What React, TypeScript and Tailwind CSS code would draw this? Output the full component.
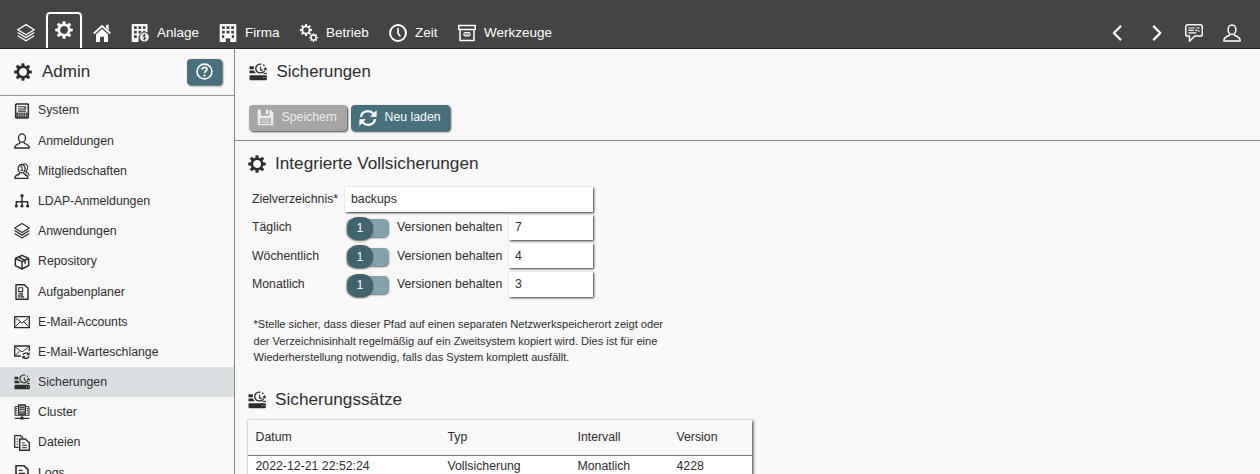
import React from 'react';

type IconProps = { className?: string };

function Svg({ className = 'size-4', children }: IconProps & { children: React.ReactNode }) {
  return (
    <svg viewBox="0 0 24 24" className={`${className} block shrink-0`} fill="none" stroke="currentColor" strokeWidth="2" strokeLinejoin="round">
      {children}
    </svg>
  );
}

const GEAR_ANGLES = [0, 45, 90, 135, 180, 225, 270, 315];

function GearShape({ w = 3.3 }: { w?: number }) {
  return (
    <g>
      <circle cx="12" cy="12" r="6.9" strokeWidth={w} />
      {GEAR_ANGLES.map((a) => (
        <path key={a} transform={`rotate(${a} 12 12)`} d="M9.7 4.6 10.2.2h3.6l.5 4.4Z" fill="currentColor" stroke="none" />
      ))}
    </g>
  );
}

const Gear = ({ className }: IconProps) => <Svg className={className}><GearShape /></Svg>;

const Gears = ({ className }: IconProps) => (
  <Svg className={className}>
    <g transform="translate(-.2 -.2) scale(.68)"><GearShape w={3.1} /></g>
    <g transform="translate(12.2 12.2) scale(.49)"><GearShape w={3.6} /></g>
  </Svg>
);

const Layers = ({ className }: IconProps) => (
  <Svg className={className}>
    <path d="M12 .8 23 7.6 12 14.4 1 7.6Z" strokeWidth="1.8" />
    <path d="M1 11.4l11 6.8 11-6.8M1 15.6l11 6.8 11-6.8" strokeWidth="1.8" />
  </Svg>
);

const Home = ({ className }: IconProps) => (
  <Svg className={className}>
    <path d="M1 12.7 12 2.6l11 10.1" strokeWidth="2.5" />
    <path d="M4 14 12 6.8l8 7.2V24h-5.3v-7H9.3v7H4Z" fill="currentColor" stroke="none" />
    <path d="M17.5 1h3.4v7.5l-3.4-3.1Z" fill="currentColor" stroke="none" />
  </Svg>
);

const Building = ({ className }: IconProps) => (
  <Svg className={className}>
    <path fillRule="evenodd" fill="currentColor" stroke="none" d="M1 0h22v24h-8v-5H9v5H1ZM4 3v3.5h3.7V3ZM10 3v3.5h4V3ZM16.3 3v3.5H20V3ZM4 9v3.5h3.7V9ZM10 9v3.5h4V9ZM16.3 9v3.5H20V9ZM4 15v3.5h3V15ZM17 15v3.5h3V15Z" />
  </Svg>
);

const Asset = ({ className }: IconProps) => (
  <Svg className={className}>
    <path fillRule="evenodd" fill="currentColor" stroke="none" d="M1 0h21v11h-9l-3 6v7H1ZM4 3v3.5h3.7V3ZM10 3v3.5h3.7V3ZM16 3v3.5h3.3V3ZM4 9v3.5h3.7V9ZM10 9v3.5h3.7V9ZM16 9v3.5h3.3V9ZM4 15v3.5h3.7V15Z" />
    <circle cx="17.8" cy="17.6" r="6.3" fill="currentColor" stroke="#444" strokeWidth="1" />
    <path d="M20 15.2c-1-1.2-4.4-1.1-4.3.7.1 1.7 4.3 1.1 4.3 3s-3.5 2-4.6.6M17.8 13v9" stroke="#444" strokeWidth="1.3" />
  </Svg>
);

const Clock = ({ className }: IconProps) => (
  <Svg className={className}>
    <circle cx="12" cy="12" r="10.6" strokeWidth="2.6" />
    <path d="M12 5.3v7l3 4.2" strokeWidth="2.2" />
  </Svg>
);

const Archive = ({ className }: IconProps) => (
  <Svg className={className}>
    <path d="M1 2h22v5.3H1ZM2.7 7.3h18.6V22H2.7Z" />
    <rect x="8" y="11.5" width="8" height="4.2" rx="1.5" strokeWidth="1.6" />
    <path d="M10 13.6h4" strokeWidth="1.2" />
  </Svg>
);

const User = ({ className }: IconProps) => (
  <Svg className={className}>
    <ellipse cx="12" cy="7.6" rx="5.2" ry="6.4" />
    <path d="M8.5 13.8v1.6C4.2 16.7 1.1 18.3 1 22.5h22c-.1-4.2-3.2-5.8-7.5-7.1v-1.6" />
  </Svg>
);

const Chat = ({ className }: IconProps) => (
  <Svg className={className}>
    <path d="M3.5 1h17A2.5 2.5 0 0 1 23 3.5v10a2.5 2.5 0 0 1-2.5 2.5H13l-7 7v-7H3.5A2.5 2.5 0 0 1 1 13.5v-10A2.5 2.5 0 0 1 3.5 1Z" />
    <path d="M4.5 5.3H13M15 5.3h4.5M4.5 8.5h7M13.5 8.500h3M4.5 11.700H15M17.5 9.5h2" strokeWidth="1.6" />
  </Svg>
);

const Chevron = ({ right }: { right?: boolean }) => (
  <Svg className="size-[18px]">
    <path d={right ? 'M7 2.5 16.5 12 7 21.5' : 'M16 2.5 6.5 12l9.500 9.500'} strokeWidth="2.9" />
  </Svg>
);

const Help = ({ className }: IconProps) => (
  <Svg className={className}>
    <circle cx="12" cy="12" r="10.5" strokeWidth="2.3" />
    <path d="M8.7 9.3C8.8 4.9 15.6 5.1 15.3 9c-.2 2.5-3.3 2.4-3.3 5.4" strokeWidth="2.5" />
    <circle cx="12" cy="17.8" r="1.5" fill="currentColor" stroke="none" />
  </Svg>
);

const Server = ({ className }: IconProps) => (
  <Svg className={className}>
    <rect x="2.5" y="1.5" width="19" height="21" rx="1" strokeWidth="2.3" />
    <path d="M6 5.7h12M6 9h12M6 12.2h12" strokeWidth="1.7" />
    <path d="M3 14h18v8H3Z" fill="currentColor" fillOpacity=".5" stroke="none" />
    <path d="M4 16.5h16M4 20h16" strokeWidth="2" strokeDasharray="2 1.5" />
    <path d="M15.5 7.5h3" strokeWidth="2" />
  </Svg>
);

const Membership = ({ className }: IconProps) => (
  <Svg className={className}>
    <path d="M14 1.6c4.7-1.6 7.7 2.8 6 7.5-.5 1.800-1.600 3-2.500 4 3 1.300 5 3 5.500 6" strokeWidth="1.6" />
    <ellipse cx="11.5" cy="8.5" rx="5.2" ry="6.3" />
    <path d="M8.5 14.5v1.3C4.3 17 1.5 18.7 1.2 23h20c-.5-4-3-6-6.5-7.2v-1.3" strokeWidth="1.9" />
    <path d="M9.5 6.2 12 5v6M9.5 11h4.5M5 20l3-3M16 17l2.5 3" strokeWidth="1.5" />
  </Svg>
);

const Tree = ({ className }: IconProps) => (
  <Svg className={className}>
    <path d="M12 4v16M3.5 20v-7h17v7" strokeWidth="2.2" />
    <g fill="currentColor" stroke="none">
      <circle cx="12" cy="4" r="2.5" />
      <circle cx="3.5" cy="19.5" r="2.4" />
      <circle cx="12" cy="19.5" r="2.4" />
      <circle cx="20.5" cy="19.5" r="2.4" />
    </g>
  </Svg>
);

const Box = ({ className }: IconProps) => (
  <Svg className={className}>
    <path d="M12 2 22 6.5v10.8L12 22.5 2 17.3V6.5ZM2 6.5 12 11.5 22 6.5M12 11.5v11" strokeWidth="2.2" />
    <path d="m6.5 4.5 10.2 5v5" strokeWidth="2.2" />
  </Svg>
);

const Planner = ({ className }: IconProps) => (
  <Svg className={className}>
    <path d="M3 1h12.5l5.5 5.5V23H3Z" strokeWidth="2.2" />
    <path d="M7 5.5h6v5.7H7ZM7 14h5.5v2.5H7v3h8M11 17l3.5 3.5" strokeWidth="1.6" />
  </Svg>
);

const Mail = ({ className }: IconProps) => (
  <Svg className={className}>
    <path d="M1 4h22v16.5H1Z" />
    <path d="m2 5.5 10 8 10-8M2 19l7-7M22 19l-7-7" strokeWidth="1.5" />
  </Svg>
);

const MailQueue = ({ className }: IconProps) => (
  <Svg className={className}>
    <path d="M10.5 18H1V3h22v8" />
    <path d="m2 4.5 10 7.5 10-7.5M2 17l6-6" strokeWidth="1.5" />
    <path d="M13.5 16.5c1.7-4.3 7-4.2 8.5-.8M22.5 18.5c-1.7 4.3-7 4.2-8.5.8" />
    <path d="M23.5 12v5h-5ZM12.5 23v-5h5Z" fill="currentColor" stroke="none" />
  </Svg>
);

const Backup = ({ className }: IconProps) => (
  <Svg className={className}>
    <path d="M.7 4.2h5.8v4H.7ZM.7 10h5.6l3 3.8H.7ZM2 16.3h20.5a1.3 1.3 0 0 1 1.3 1.3v4a1.3 1.3 0 0 1-1.3 1.3H2A1.3 1.3 0 0 1 .7 21.6v-4A1.3 1.3 0 0 1 2 16.3Z" fill="currentColor" stroke="none" />
    <path d="M16.5 1.7C11.5.7 8.3 4.5 9.2 8.7c1 4.9 8.8 6.5 12.2 1.3" strokeWidth="1.8" />
    <path d="M15.5 5v4.2l2.8 1.3M18.7 2.4l2 1.6" strokeWidth="1.6" />
    <path d="m18.8 8.3 3.8-3 1.4 4.7Z" fill="currentColor" stroke="none" />
    <path d="M19.5 14h4.2" strokeWidth="1.6" />
    <path d="M18.5 19.6h1M21 19.6h1" stroke="#eee" strokeWidth="1.3" />
  </Svg>
);

const Cluster = ({ className }: IconProps) => (
  <Svg className={className}>
    <path d="M7 1.5h10v15H7Z" fill="currentColor" fillOpacity=".25" />
    <path d="M6 4H1.5v13H6M18 4h4.5v13H18" strokeWidth="1.5" />
    <path d="M9 5h6M9 8h6M2 7h3M2 10h3M2 13.5h3M19 7h3M19 10h3M19 13.5h3" strokeWidth="1.5" />
    <path d="M8 11h8v5H8Z" fill="currentColor" fillOpacity=".6" stroke="none" />
    <path d="M1 21.5h22M12 17v4.5" strokeWidth="2" />
    <path d="M9.5 19.8h5v3.4h-5Z" fill="currentColor" stroke="none" />
  </Svg>
);

const Files = ({ className }: IconProps) => (
  <Svg className={className}>
    <path d="M7 18.5H1V1h9l3.5 3" />
    <path d="M8.5 6H17l6 5.5V23H8.5Z" strokeWidth="2.2" />
    <path d="M12 12h4M12 15.5h7.5M12 19h7.5M4 6h2M4 10h2M4 14h2" strokeWidth="1.6" />
  </Svg>
);

const Log = ({ className }: IconProps) => (
  <Svg className={className}>
    <path d="M3 1h12l6 6v16H3Z" strokeWidth="2.4" />
    <path d="M7 8h6M7 12.5h10M7 17h10" strokeWidth="2" />
  </Svg>
);

const Save = ({ className }: IconProps) => (
  <Svg className={className}>
    <path fillRule="evenodd" fill="currentColor" stroke="none" d="M2 1h3.5v8.5h12V1H19l4 4v16.5a1.5 1.5 0 0 1-1.5 1.5h-19A1.5 1.5 0 0 1 1 21.5V2a1 1 0 0 1 1-1ZM4.500 13v8h15v-8ZM12.500 1h3.500v6.500h-3.500Z" />
    <path d="M6 15.5h12M6 18.7h12" strokeWidth="1.7" />
  </Svg>
);

const Reload = ({ className }: IconProps) => (
  <Svg className={className}>
    <path d="M2.5 10.5C4 2 14.5.5 19.3 6.3M21.5 13.5c-1.5 8.5-12 10-16.8 4.2" strokeWidth="3" />
    <path d="M23.5 1.500v8.700h-8.700ZM.5 22.500v-8.700h8.700Z" fill="currentColor" stroke="none" />
  </Svg>
);

const nav = [
  { Icon: Asset, label: 'Anlage', cls: 'w-[88px]' },
  { Icon: Building, label: 'Firma', cls: 'w-[81px]' },
  { Icon: Gears, label: 'Betrieb', cls: 'w-[89px]' },
  { Icon: Clock, label: 'Zeit', cls: 'w-[69px]' },
  { Icon: Archive, label: 'Werkzeuge', cls: 'w-[110px]' },
];

const menu = [
  { Icon: Server, label: 'System' },
  { Icon: User, label: 'Anmeldungen' },
  { Icon: Membership, label: 'Mitgliedschaften' },
  { Icon: Tree, label: 'LDAP-Anmeldungen' },
  { Icon: Layers, label: 'Anwendungen' },
  { Icon: Box, label: 'Repository' },
  { Icon: Planner, label: 'Aufgabenplaner' },
  { Icon: Mail, label: 'E-Mail-Accounts' },
  { Icon: MailQueue, label: 'E-Mail-Warteschlange' },
  { Icon: Backup, label: 'Sicherungen', active: true },
  { Icon: Cluster, label: 'Cluster' },
  { Icon: Files, label: 'Dateien' },
  { Icon: Log, label: 'Logs' },
];

const intervals = [
  { label: 'Täglich', keep: '7' },
  { label: 'Wöchentlich', keep: '4' },
  { label: 'Monatlich', keep: '3' },
];

function Header() {
  return (
    <header className="flex h-[49px] shrink-0 items-start border-b border-[#222] bg-[#444] pl-[17px] text-[13.5px] text-white">
      <Layers className="mt-6 size-[18px]" />
      <div className="mt-3 ml-[11px] flex h-9 w-9 justify-center rounded-t-[4px] border-2 border-b-0 border-white pt-[7px]">
        <Gear className="size-[18px]" />
      </div>
      <Home className="mt-6 ml-[10.5px] size-[18px]" />
      <nav className="mt-6 ml-[20.5px] flex h-[18px] items-center">
        {nav.map(({ Icon, label, cls }) => (
          <div key={label} className={`${cls} flex items-center gap-2 whitespace-nowrap`}>
            <Icon className="size-[18px]" />
            <span>{label}</span>
          </div>
        ))}
      </nav>
      <div className="mt-6 mr-[19px] ml-auto flex items-center">
        <Chevron />
        <div className="ml-[21px]"><Chevron right /></div>
        <Chat className="ml-[19px] size-[18px]" />
        <User className="ml-5 size-[18px]" />
      </div>
    </header>
  );
}

function Sidebar() {
  return (
    <aside className="w-[235px] shrink-0 overflow-hidden border-r border-[#888]">
      <div className="flex h-[46.5px] items-center border-b border-[#999] pr-3 pl-[14px]">
        <Gear className="size-[18px]" />
        <h1 className="ml-[10px] text-[17px]">Admin</h1>
        <button className="ml-auto flex h-[26px] w-[35px] items-center justify-center rounded-[4px] bg-[#46707c] text-white shadow-[1px_1px_2px_#555]">
          <Help className="size-[17px]" />
        </button>
      </div>
      {menu.map(({ Icon, label, active }) => (
        <div key={label} className={`flex h-[30.2px] items-center gap-2 pl-[14px] text-[12.3px] ${active ? 'bg-[#d9dfe1]' : ''}`}>
          <Icon className="size-4" />
          <span>{label}</span>
        </div>
      ))}
    </aside>
  );
}

const field = 'flex items-center bg-white pl-[6px] shadow-[1px_1px_2px_#333]';

function Settings() {
  return (
    <section className="pl-[13px]">
      <h2 className="flex h-[46px] items-center gap-[9px] text-[17.2px]">
        <Gear className="size-[18px]" />
        Integrierte Vollsicherungen
      </h2>
      <div className="flex h-[26px] items-start pt-px text-[12.3px]">
        <span className="ml-[4px] w-[93px] leading-[23px]">Zielverzeichnis*</span>
        <div className={`${field} mt-[-1px] h-[25px] w-[248px]`}>backups</div>
      </div>
      {intervals.map(({ label, keep }) => (
        <div key={label} className="flex h-[28.6px] items-center text-[12.3px]">
          <span className="ml-[4px] w-[95px]">{label}</span>
          <div className="mt-[2px] flex h-[18px] w-[42px] items-center rounded-[5px] bg-[#84a2ad] shadow-[0_1px_2px_#666]">
            <span className="flex h-[23px] w-[26px] items-center justify-center rounded-[11px] bg-[#406370] text-white shadow-[0_1px_2px_#555]">1</span>
          </div>
          <span className="ml-2 w-[112px]">Versionen behalten</span>
          <div className={`${field} h-[25px] w-[84px]`}>{keep}</div>
        </div>
      ))}
      <p className="mt-[17.3px] ml-[5.5px] text-[11.08px] leading-[16.7px] whitespace-nowrap">
        *Stelle sicher, dass dieser Pfad auf einen separaten Netzwerkspeicherort zeigt oder
        <br />
        der Verzeichnisinhalt regelmäßig auf ein Zweitsystem kopiert wird. Dies ist für eine
        <br />
        Wiederherstellung notwendig, falls das System komplett ausfällt.
      </p>
    </section>
  );
}

function BackupSets() {
  return (
    <section className="mt-[21px] pl-[13px]">
      <h2 className="flex h-[26px] items-center gap-[9px] text-[17.2px]">
        <Backup className="size-[18px]" />
        Sicherungssätze
      </h2>
      <table className="mt-[7px] w-[504px] table-fixed text-left text-[12.3px] shadow-[1px_1px_3px_#333]">
        <colgroup>
          <col className="w-[192px]" />
          <col className="w-[130px]" />
          <col className="w-[99px]" />
          <col />
        </colgroup>
        <thead>
          <tr className="h-[35px] border-b border-[#777]">
            {['Datum', 'Typ', 'Intervall', 'Version'].map((h) => (
              <th key={h} className="pl-[7.5px] font-normal">{h}</th>
            ))}
          </tr>
        </thead>
        <tbody>
          <tr className="h-[28px] bg-white align-top leading-[20px]">
            {['2022-12-21 22:52:24', 'Vollsicherung', 'Monatlich', '4228'].map((c) => (
              <td key={c} className="pl-[7.5px]">{c}</td>
            ))}
          </tr>
        </tbody>
      </table>
    </section>
  );
}

export default function App() {
  return (
    <div className="flex h-[474px] w-[1260px] flex-col overflow-hidden bg-[#f8f8f8] font-['Liberation_Sans',Arial,sans-serif] text-[#2d2d2d]">
      <Header />
      <div className="flex min-h-0 flex-1">
        <Sidebar />
        <main className="min-w-0 flex-1 overflow-hidden">
          <div className="h-[92px] border-b border-[#888] pl-[13.5px]">
            <h1 className="flex h-[46px] items-center gap-[10px] text-[16.8px]">
              <Backup className="size-[18px]" />
              Sicherungen
            </h1>
            <div className="mt-[9.5px] flex gap-[4px] text-[12.3px] text-white">
              <button className="flex h-[26px] w-[98px] items-center gap-2 rounded-[4px] bg-[#a6a6a6] pl-2 text-[#eee] shadow-[1px_1px_2px_#444]">
                <Save className="size-[17px]" />
                Speichern
              </button>
              <button className="flex h-[26px] w-[99px] items-center gap-2 rounded-[4px] bg-[#46707c] pl-2 shadow-[1px_1px_2px_#444]">
                <Reload className="size-[18px]" />
                Neu laden
              </button>
            </div>
          </div>
          <Settings />
          <BackupSets />
        </main>
      </div>
    </div>
  );
}
